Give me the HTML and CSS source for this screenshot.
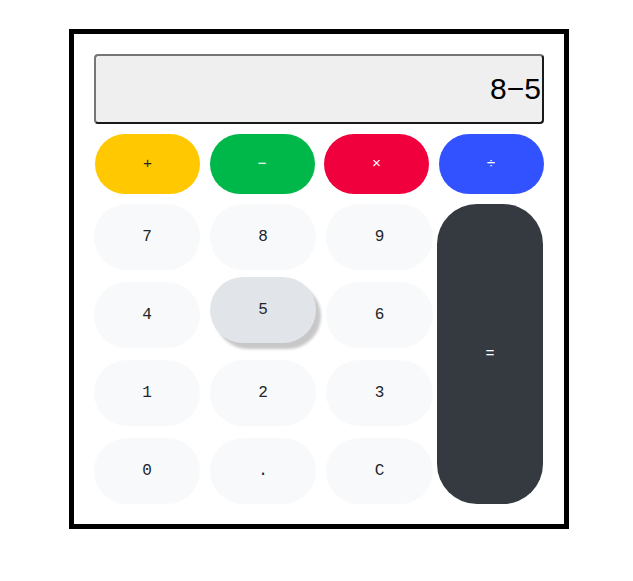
FILE: index.html
```html
<!DOCTYPE html>
<html>
<head>
<meta charset="utf-8">
<link rel="stylesheet" href="styles.css">
</head>
<body>
<div class="calc">
  <div class="display">8−5</div>
  <div class="ops">
    <button class="key op add">+</button>
    <button class="key op sub">−</button>
    <button class="key op mul">×</button>
    <button class="key op div">÷</button>
  </div>
  <div class="keys">
    <button class="key num">7</button>
    <button class="key num">8</button>
    <button class="key num">9</button>
    <button class="key eq">=</button>
    <button class="key num">4</button>
    <button class="key num hover">5</button>
    <button class="key num">6</button>
    <button class="key num">1</button>
    <button class="key num">2</button>
    <button class="key num">3</button>
    <button class="key num">0</button>
    <button class="key num">.</button>
    <button class="key num">C</button>
  </div>
</div>
</body>
</html>
```

FILE: styles.css
```css
html, body {
  margin: 0;
  padding: 0;
  background: #fff;
}
body {
  padding: 29px 0 0 69px;
}
.calc {
  box-sizing: border-box;
  width: 500px;
  height: 500px;
  border: 5px solid #000;
  padding: 20px;
  display: flex;
  flex-direction: column;
  gap: 10px;
}
.display {
  box-sizing: border-box;
  flex: 0 0 70px;
  height: 70px;
  background: #efefef;
  border: 2px solid;
  border-color: #767676 #1a1a1a #1a1a1a #767676;
  border-radius: 4px;
  font-family: "Liberation Sans", Arial, sans-serif;
  font-size: 30px;
  color: #000;
  display: flex;
  align-items: center;
  justify-content: flex-end;
  padding: 0 1px 0 0;
}
.ops {
  flex: 0 0 60px;
  display: grid;
  grid-template-columns: 105px 105px 105px 105px;
  column-gap: 9.5px;
  padding-left: 1px;
}
.keys {
  display: grid;
  grid-template-columns: 106px 106px 107px 106px;
  grid-template-rows: repeat(4, 66px);
  column-gap: 10px;
  row-gap: 12px;
}
.key {
  border: none;
  border-radius: 40px;
  font-family: "Liberation Mono", "Courier New", monospace;
  font-size: 15px;
  padding: 0;
  cursor: pointer;
}
.op { color: #fff; }
.add { background: #ffc800; color: #212529; }
.sub { background: #00b84a; }
.mul { background: #f0003c; }
.div { background: #3352ff; }
.num {
  font-size: 16px;
  background: #f8f9fa;
  color: #212529;
}
.eq {
  grid-column: 4;
  grid-row: 1 / span 4;
  justify-self: start;
  width: 106px;
  margin-left: -6px;
  background: #343a40;
  color: #fff;
  border-radius: 40px;
}
.hover {
  background: #e1e5ea;
  transform: translateY(-5px);
  box-shadow: 5px 6px 3px rgba(0, 0, 0, 0.22);
}
```
